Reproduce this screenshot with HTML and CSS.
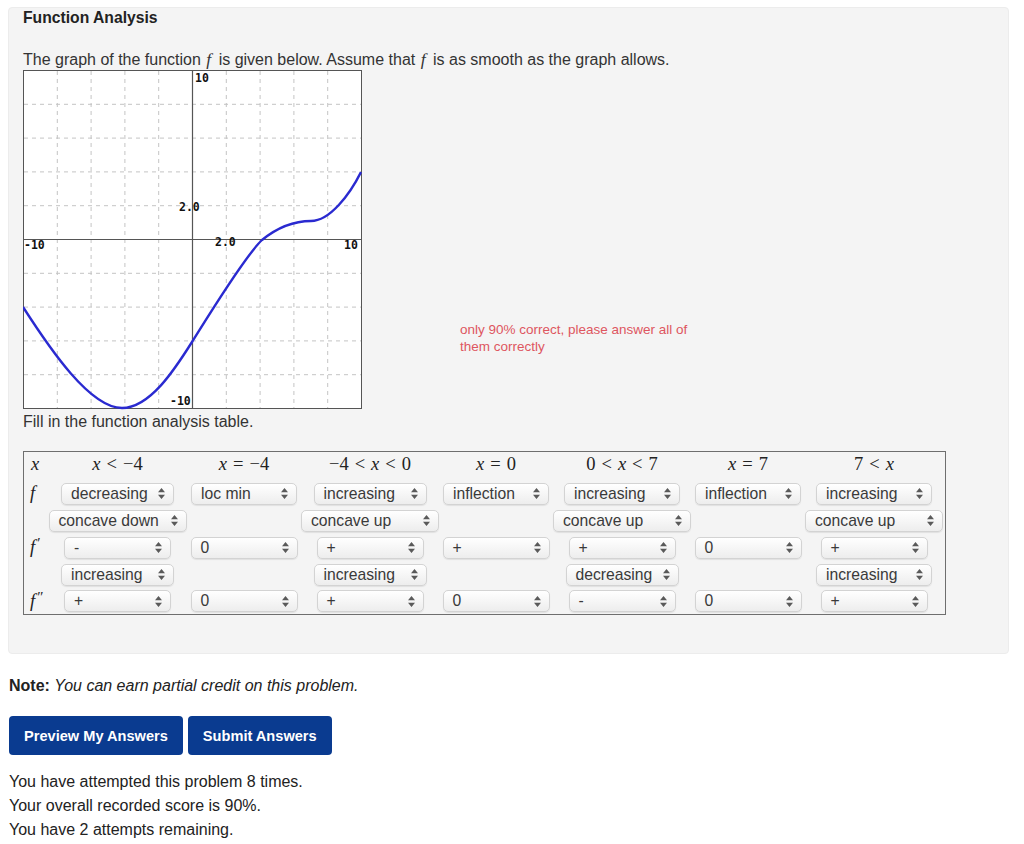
FILE: index.html
```html
<!DOCTYPE html>
<html>
<head>
<meta charset="utf-8">
<link rel="stylesheet" href="styles.css">
</head>
<body>
<div class="panel">
  <div class="title">Function Analysis</div>
  <p class="intro">The graph of the function <i class="m">f</i> is given below. Assume that <i class="m">f</i> is as smooth as the graph allows.</p>
  <div class="graph-row">
    <svg class="graph" width="339" height="340" viewBox="0 0 339 340">
      <rect x="0.5" y="0.5" width="338" height="338" fill="#fff" stroke="#555" stroke-width="1"/>
      <g stroke="#c4c4c4" stroke-width="1" stroke-dasharray="4,4">
        <line x1="34.3" y1="1" x2="34.3" y2="338"/>
        <line x1="68.1" y1="1" x2="68.1" y2="338"/>
        <line x1="101.9" y1="1" x2="101.9" y2="338"/>
        <line x1="135.7" y1="1" x2="135.7" y2="338"/>
        <line x1="203.3" y1="1" x2="203.3" y2="338"/>
        <line x1="237.1" y1="1" x2="237.1" y2="338"/>
        <line x1="270.9" y1="1" x2="270.9" y2="338"/>
        <line x1="304.7" y1="1" x2="304.7" y2="338"/>
        <line x1="1" y1="34.3" x2="338" y2="34.3"/>
        <line x1="1" y1="68.1" x2="338" y2="68.1"/>
        <line x1="1" y1="101.9" x2="338" y2="101.9"/>
        <line x1="1" y1="135.7" x2="338" y2="135.7"/>
        <line x1="1" y1="203.3" x2="338" y2="203.3"/>
        <line x1="1" y1="237.1" x2="338" y2="237.1"/>
        <line x1="1" y1="270.9" x2="338" y2="270.9"/>
        <line x1="1" y1="304.7" x2="338" y2="304.7"/>
      </g>
      <g stroke="#555" stroke-width="1.2">
        <line x1="169.5" y1="1" x2="169.5" y2="338"/>
        <line x1="1" y1="169.5" x2="338" y2="169.5"/>
      </g>
      <g class="lbl">
        <text x="172" y="12">10</text>
        <text x="156" y="141">2.0</text>
        <text x="192" y="176">2.0</text>
        <text x="1" y="179">-10</text>
        <text x="321" y="179">10</text>
        <text x="147" y="335">-10</text>
      </g>
      <path d="M0,237 C27,279 67,338 99,338 C127,338 152,299 169,272 C186,245 222,186 239,170 C255,157 272,151 288,151 C307,151 327,124 338,102" fill="none" stroke="#2a2ad0" stroke-width="2.4"/>
    </svg>
    <div class="feedback">only 90% correct, please answer all of them correctly</div>
  </div>
  <p class="fill">Fill in the function analysis table.</p>

  <div class="ftable">
    <div class="c lab first"><i>x</i></div>
    <div class="c hd"><i>x</i><span class="op">&lt;</span>−4</div>
    <div class="c hd"><i>x</i><span class="op">=</span>−4</div>
    <div class="c hd">−4<span class="op">&lt;</span><i>x</i><span class="op">&lt;</span>0</div>
    <div class="c hd"><i>x</i><span class="op">=</span>0</div>
    <div class="c hd">0<span class="op">&lt;</span><i>x</i><span class="op">&lt;</span>7</div>
    <div class="c hd"><i>x</i><span class="op">=</span>7</div>
    <div class="c hd last">7<span class="op">&lt;</span><i>x</i></div>

    <div class="c lab"><i>f</i></div>
    <div class="c"><span class="sel w-mono">decreasing<svg class="arr" width="7" height="11" viewBox="0 0 7 11"><path d="M0,4.2 L3.5,0 L7,4.2Z M0,6.8 L3.5,11 L7,6.8Z"/></svg></span></div>
    <div class="c"><span class="sel w-pt">loc min<svg class="arr" width="7" height="11" viewBox="0 0 7 11"><path d="M0,4.2 L3.5,0 L7,4.2Z M0,6.8 L3.5,11 L7,6.8Z"/></svg></span></div>
    <div class="c"><span class="sel w-mono">increasing<svg class="arr" width="7" height="11" viewBox="0 0 7 11"><path d="M0,4.2 L3.5,0 L7,4.2Z M0,6.8 L3.5,11 L7,6.8Z"/></svg></span></div>
    <div class="c"><span class="sel w-pt">inflection<svg class="arr" width="7" height="11" viewBox="0 0 7 11"><path d="M0,4.2 L3.5,0 L7,4.2Z M0,6.8 L3.5,11 L7,6.8Z"/></svg></span></div>
    <div class="c"><span class="sel w-mono2">increasing<svg class="arr" width="7" height="11" viewBox="0 0 7 11"><path d="M0,4.2 L3.5,0 L7,4.2Z M0,6.8 L3.5,11 L7,6.8Z"/></svg></span></div>
    <div class="c"><span class="sel w-pt">inflection<svg class="arr" width="7" height="11" viewBox="0 0 7 11"><path d="M0,4.2 L3.5,0 L7,4.2Z M0,6.8 L3.5,11 L7,6.8Z"/></svg></span></div>
    <div class="c last"><span class="sel w-mono2">increasing<svg class="arr" width="7" height="11" viewBox="0 0 7 11"><path d="M0,4.2 L3.5,0 L7,4.2Z M0,6.8 L3.5,11 L7,6.8Z"/></svg></span></div>

    <div class="c lab"></div>
    <div class="c"><span class="sel w-conc">concave down<svg class="arr" width="7" height="11" viewBox="0 0 7 11"><path d="M0,4.2 L3.5,0 L7,4.2Z M0,6.8 L3.5,11 L7,6.8Z"/></svg></span></div>
    <div class="c"></div>
    <div class="c"><span class="sel w-conc">concave up<svg class="arr" width="7" height="11" viewBox="0 0 7 11"><path d="M0,4.2 L3.5,0 L7,4.2Z M0,6.8 L3.5,11 L7,6.8Z"/></svg></span></div>
    <div class="c"></div>
    <div class="c"><span class="sel w-conc">concave up<svg class="arr" width="7" height="11" viewBox="0 0 7 11"><path d="M0,4.2 L3.5,0 L7,4.2Z M0,6.8 L3.5,11 L7,6.8Z"/></svg></span></div>
    <div class="c"></div>
    <div class="c last"><span class="sel w-conc">concave up<svg class="arr" width="7" height="11" viewBox="0 0 7 11"><path d="M0,4.2 L3.5,0 L7,4.2Z M0,6.8 L3.5,11 L7,6.8Z"/></svg></span></div>

    <div class="c lab"><i>f</i><span class="pr">′</span></div>
    <div class="c"><span class="sel w-sign">-<svg class="arr" width="7" height="11" viewBox="0 0 7 11"><path d="M0,4.2 L3.5,0 L7,4.2Z M0,6.8 L3.5,11 L7,6.8Z"/></svg></span></div>
    <div class="c"><span class="sel w-sign">0<svg class="arr" width="7" height="11" viewBox="0 0 7 11"><path d="M0,4.2 L3.5,0 L7,4.2Z M0,6.8 L3.5,11 L7,6.8Z"/></svg></span></div>
    <div class="c"><span class="sel w-sign">+<svg class="arr" width="7" height="11" viewBox="0 0 7 11"><path d="M0,4.2 L3.5,0 L7,4.2Z M0,6.8 L3.5,11 L7,6.8Z"/></svg></span></div>
    <div class="c"><span class="sel w-sign">+<svg class="arr" width="7" height="11" viewBox="0 0 7 11"><path d="M0,4.2 L3.5,0 L7,4.2Z M0,6.8 L3.5,11 L7,6.8Z"/></svg></span></div>
    <div class="c"><span class="sel w-sign">+<svg class="arr" width="7" height="11" viewBox="0 0 7 11"><path d="M0,4.2 L3.5,0 L7,4.2Z M0,6.8 L3.5,11 L7,6.8Z"/></svg></span></div>
    <div class="c"><span class="sel w-sign">0<svg class="arr" width="7" height="11" viewBox="0 0 7 11"><path d="M0,4.2 L3.5,0 L7,4.2Z M0,6.8 L3.5,11 L7,6.8Z"/></svg></span></div>
    <div class="c last"><span class="sel w-sign">+<svg class="arr" width="7" height="11" viewBox="0 0 7 11"><path d="M0,4.2 L3.5,0 L7,4.2Z M0,6.8 L3.5,11 L7,6.8Z"/></svg></span></div>

    <div class="c lab"></div>
    <div class="c"><span class="sel w-mono">increasing<svg class="arr" width="7" height="11" viewBox="0 0 7 11"><path d="M0,4.2 L3.5,0 L7,4.2Z M0,6.8 L3.5,11 L7,6.8Z"/></svg></span></div>
    <div class="c"></div>
    <div class="c"><span class="sel w-mono">increasing<svg class="arr" width="7" height="11" viewBox="0 0 7 11"><path d="M0,4.2 L3.5,0 L7,4.2Z M0,6.8 L3.5,11 L7,6.8Z"/></svg></span></div>
    <div class="c"></div>
    <div class="c"><span class="sel w-mono">decreasing<svg class="arr" width="7" height="11" viewBox="0 0 7 11"><path d="M0,4.2 L3.5,0 L7,4.2Z M0,6.8 L3.5,11 L7,6.8Z"/></svg></span></div>
    <div class="c"></div>
    <div class="c last"><span class="sel w-mono2">increasing<svg class="arr" width="7" height="11" viewBox="0 0 7 11"><path d="M0,4.2 L3.5,0 L7,4.2Z M0,6.8 L3.5,11 L7,6.8Z"/></svg></span></div>

    <div class="c lab"><i>f</i><span class="pr">″</span></div>
    <div class="c"><span class="sel w-sign">+<svg class="arr" width="7" height="11" viewBox="0 0 7 11"><path d="M0,4.2 L3.5,0 L7,4.2Z M0,6.8 L3.5,11 L7,6.8Z"/></svg></span></div>
    <div class="c"><span class="sel w-sign">0<svg class="arr" width="7" height="11" viewBox="0 0 7 11"><path d="M0,4.2 L3.5,0 L7,4.2Z M0,6.8 L3.5,11 L7,6.8Z"/></svg></span></div>
    <div class="c"><span class="sel w-sign">+<svg class="arr" width="7" height="11" viewBox="0 0 7 11"><path d="M0,4.2 L3.5,0 L7,4.2Z M0,6.8 L3.5,11 L7,6.8Z"/></svg></span></div>
    <div class="c"><span class="sel w-sign">0<svg class="arr" width="7" height="11" viewBox="0 0 7 11"><path d="M0,4.2 L3.5,0 L7,4.2Z M0,6.8 L3.5,11 L7,6.8Z"/></svg></span></div>
    <div class="c"><span class="sel w-sign">-<svg class="arr" width="7" height="11" viewBox="0 0 7 11"><path d="M0,4.2 L3.5,0 L7,4.2Z M0,6.8 L3.5,11 L7,6.8Z"/></svg></span></div>
    <div class="c"><span class="sel w-sign">0<svg class="arr" width="7" height="11" viewBox="0 0 7 11"><path d="M0,4.2 L3.5,0 L7,4.2Z M0,6.8 L3.5,11 L7,6.8Z"/></svg></span></div>
    <div class="c last"><span class="sel w-sign">+<svg class="arr" width="7" height="11" viewBox="0 0 7 11"><path d="M0,4.2 L3.5,0 L7,4.2Z M0,6.8 L3.5,11 L7,6.8Z"/></svg></span></div>
  </div>
</div>

<p class="note"><b>Note:</b> <i>You can earn partial credit on this problem.</i></p>
<div class="buttons">
  <button class="btn">Preview My Answers</button>
  <button class="btn">Submit Answers</button>
</div>
<div class="attempts">
  <div>You have attempted this problem 8 times.</div>
  <div>Your overall recorded score is 90%.</div>
  <div>You have 2 attempts remaining.</div>
</div>
</body>
</html>
```

FILE: styles.css
```css
html, body {
  margin: 0;
  padding: 0;
  background: #fff;
}
body {
  font-family: "Liberation Sans", Arial, sans-serif;
  color: #2b2b2b;
  font-size: 16px;
}
.panel {
  margin: 7px 15px 0 8px;
  background: #f4f4f4;
  border: 1px solid #ececec;
  border-radius: 4px;
  padding: 0 0 38px 14px;
}
.title {
  font-weight: bold;
  font-size: 15.7px;
  line-height: 20px;
  color: #222;
}
.intro {
  margin: 21px 0 0 0;
  line-height: 20px;
  font-size: 16px;
  color: #333;
}
.m {
  font-family: "Liberation Serif", "Times New Roman", serif;
  font-size: 17.5px;
  margin-right: 3px;
  margin-left: 1px;
}
.graph-row {
  display: flex;
  align-items: flex-start;
  margin-top: 0;
}
.graph {
  display: block;
}
.lbl text {
  font-family: "DejaVu Sans Mono", monospace;
  font-weight: bold;
  font-size: 11.5px;
  fill: #111;
}
.feedback {
  margin: 251px 0 0 98px;
  width: 240px;
  color: #de5660;
  font-size: 13.5px;
  line-height: 17px;
}
.fill {
  margin: 2px 0 0 0;
  line-height: 20px;
  font-size: 16px;
  color: #333;
}
.ftable {
  margin-top: 19px;
  width: 921px;
  border: 1px solid #6e6e6e;
  display: grid;
  grid-template-columns: 30px 127px 126px 126px 126px 126px 126px 134px;
  grid-template-rows: 28px 27px 27px 27px 27px 26px;
  background: #f4f4f4;
}
.c {
  display: flex;
  align-items: center;
  justify-content: center;
  min-width: 0;
}
.c.last {
  padding-right: 8px;
}
.lab {
  justify-content: flex-start;
  padding-left: 6px;
  font-family: "Liberation Serif", "Times New Roman", serif;
  font-size: 18.5px;
  color: #222;
}
.lab.first {
  padding-left: 7px;
  padding-bottom: 3px;
}
.pr {
  font-style: normal;
  font-size: 15px;
  margin-left: 2px;
  position: relative;
  top: -4px;
}
.hd {
  font-family: "Liberation Serif", "Times New Roman", serif;
  font-size: 18.5px;
  color: #222;
  padding-bottom: 3px;
  white-space: nowrap;
}
.op {
  margin: 0 6px;
}
.sel {
  flex: none;
  box-sizing: border-box;
  height: 22px;
  display: flex;
  align-items: center;
  justify-content: space-between;
  padding: 0 8px 0 9px;
  border: 1px solid #d3d3d3;
  border-radius: 5px;
  background: linear-gradient(#ffffff, #ededed);
  box-shadow: 0 1px 1px rgba(0, 0, 0, 0.08);
  font-family: "Liberation Sans", Arial, sans-serif;
  font-size: 15.7px;
  color: #3a3a3a;
  white-space: nowrap;
}
.arr {
  flex: none;
  fill: #5a5a5a;
}
.w-mono { width: 113px; }
.w-mono2 { width: 116px; }
.w-pt { width: 106px; }
.w-conc { width: 138px; }
.w-sign { width: 107px; }

.note {
  margin: 22px 0 0 9px;
  font-size: 16px;
  line-height: 20px;
  color: #222;
}
.buttons {
  display: flex;
  gap: 5px;
  margin: 20px 0 0 9px;
}
.btn {
  height: 39px;
  padding: 0 15px;
  border: none;
  border-radius: 4px;
  background: #0a3b90;
  color: #fff;
  font-family: "Liberation Sans", Arial, sans-serif;
  font-size: 14.6px;
  font-weight: bold;
}
.attempts {
  margin: 15px 0 0 9px;
  font-size: 16px;
  line-height: 24px;
  color: #222;
}
```
